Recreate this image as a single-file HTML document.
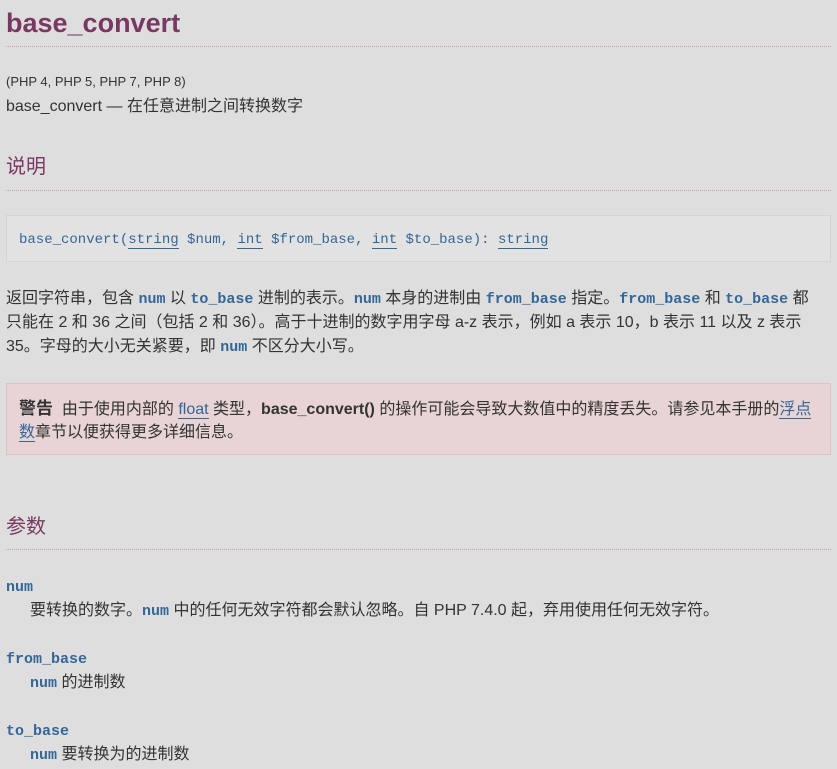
<!DOCTYPE html>
<html><head><meta charset="utf-8"><style>
body{margin:0;background:#dedede;width:837px;height:769px;overflow:hidden;font-family:"Liberation Sans","Noto Sans CJK SC",sans-serif;font-size:16px;color:#333;position:relative}
.a{position:absolute;left:6px;white-space:nowrap;line-height:24px}
h1{position:absolute;left:6px;top:3px;margin:0;font-size:27px;line-height:40px;color:#793862;font-weight:bold}
h2{position:absolute;left:6px;margin:0;font-size:20px;font-weight:normal;color:#793862;line-height:30px}
.hr{position:absolute;left:6px;right:6px;border-top:1px dotted #c8a0bc;height:0}
.m{font-family:"Liberation Mono","Noto Sans CJK SC",monospace}
b.m{color:#369;font-weight:bold;font-size:15px}
.code{position:absolute;left:6px;top:215px;width:825px;height:47px;border:1px solid #d4d4d4;background:#e2e2e2;box-sizing:border-box}
.code span{position:absolute;left:12px;top:12px;font-family:"Liberation Mono",monospace;font-size:14px;color:#369;line-height:24px;white-space:nowrap}
u{text-decoration:none;border-bottom:1px solid #369}
.warn{position:absolute;left:6px;top:383px;width:825px;height:72px;background:#e8d4d4;border:1px solid #dcc4c4;box-sizing:border-box}
a{color:#369;text-decoration:none;border-bottom:1px solid #369}
</style></head><body>
<h1>base_convert</h1>
<div class="hr" style="top:46px"></div>
<div class="a" style="top:70px;font-size:13px">(PHP 4, PHP 5, PHP 7, PHP 8)</div>
<div class="a" style="top:95px">base_convert — 在任意进制之间转换数字</div>
<h2 style="top:152px">说明</h2>
<div class="hr" style="top:190px"></div>
<div class="code"><span>base_convert(<u>string</u> $num, <u>int</u> $from_base, <u>int</u> $to_base): <u>string</u></span></div>
<div class="a" style="top:287px">返回字符串，包含 <b class="m">num</b> 以 <b class="m">to_base</b> 进制的表示。<b class="m">num</b> 本身的进制由 <b class="m">from_base</b> 指定。<b class="m">from_base</b> 和 <b class="m">to_base</b> 都</div>
<div class="a" style="top:311px">只能在 2 和 36 之间（包括 2 和 36）。高于十进制的数字用字母 a-z 表示，例如 a 表示 10，b 表示 11 以及 z 表示</div>
<div class="a" style="top:335px">35。字母的大小无关紧要，即 <b class="m">num</b> 不区分大小写。</div>
<div class="warn">
<div class="a" style="left:12px;top:13px"><b style="font-size:17px">警告</b> &nbsp;由于使用内部的 <a>float</a> 类型，<b>base_convert()</b> 的操作可能会导致大数值中的精度丢失。请参见本手册的<a>浮点</a></div>
<div class="a" style="left:12px;top:37px"><a>数</a>章节以便获得更多详细信息。</div>
</div>
<h2 style="top:512px">参数</h2>
<div class="hr" style="top:549px"></div>
<div class="a" style="top:575px"><b class="m">num</b></div>
<div class="a" style="top:599px;left:30px">要转换的数字。<b class="m">num</b> 中的任何无效字符都会默认忽略。自 PHP 7.4.0 起，弃用使用任何无效字符。</div>
<div class="a" style="top:647px"><b class="m">from_base</b></div>
<div class="a" style="top:671px;left:30px"><b class="m">num</b> 的进制数</div>
<div class="a" style="top:719px"><b class="m">to_base</b></div>
<div class="a" style="top:743px;left:30px"><b class="m">num</b> 要转换为的进制数</div>
</body></html>
